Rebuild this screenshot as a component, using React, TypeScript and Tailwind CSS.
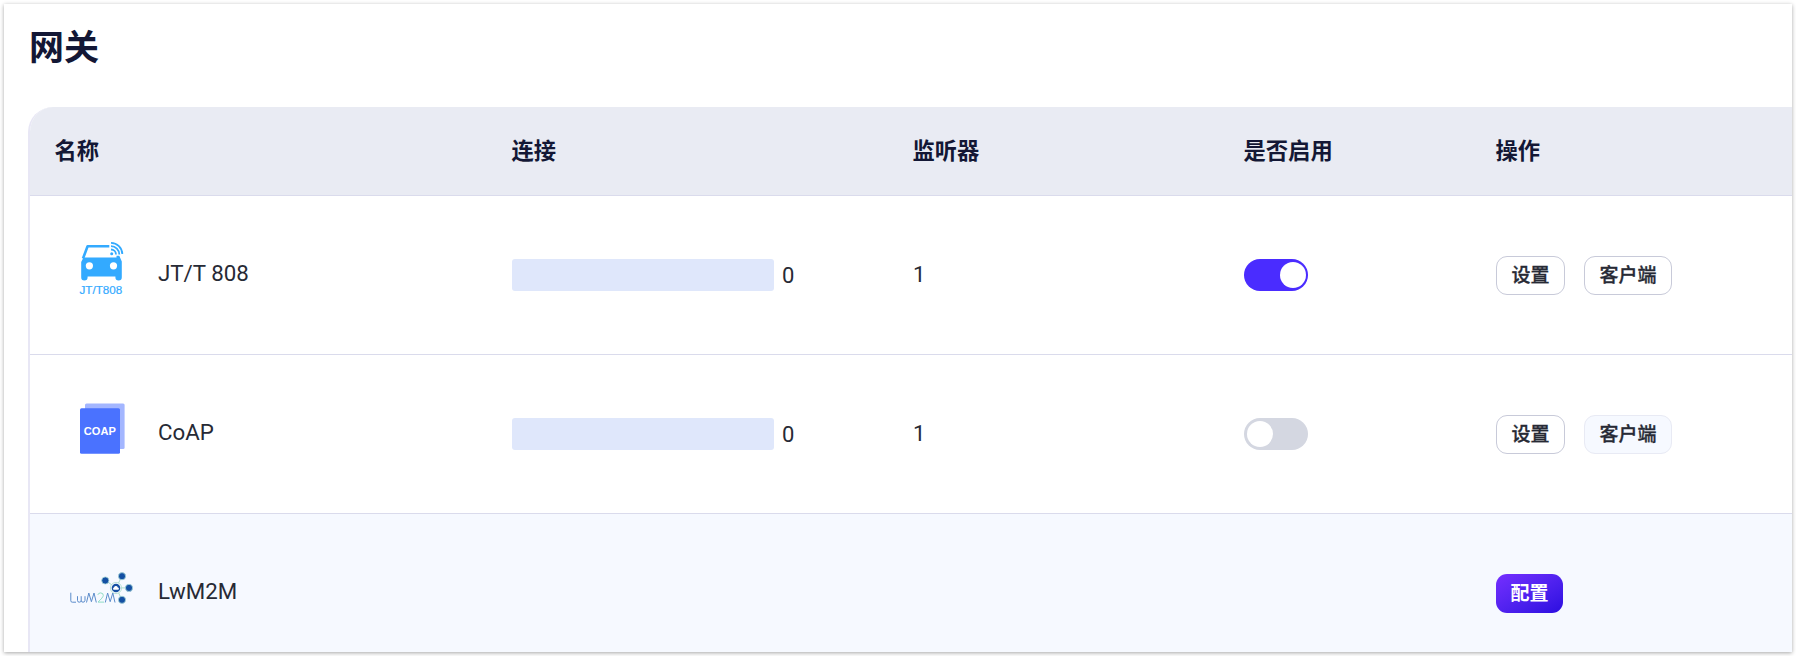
import type { ReactNode } from "react";

const columns = ["名称", "连接", "监听器", "是否启用", "操作"];
const grid = "grid grid-cols-[457px_401px_331px_252px_1fr] pl-[25px]";

function CarLogo() {
  return (
    <svg width="64" height="64" viewBox="0 0 64 64">
      <path d="M38.300 12.200H16.600L12 24.500" fill="none" stroke="#33aaff" strokeWidth="2.600" strokeLinejoin="round" />
      <path
        d="M12.500 23.600H45.500V21.800H48.300L50.800 27.500V43.300A3.200 3.200 0 0 1 44.400 43.300V42.600H16.600V43.300A3.200 3.200 0 0 1 10.200 43.300V28Z"
        fill="#33aaff"
      />
      <circle cx="18.400" cy="31.800" r="3.600" fill="#fff" />
      <circle cx="42.500" cy="31.800" r="3.600" fill="#fff" />
      <circle cx="40.700" cy="19.700" r="1.500" fill="#33aaff" />
      <g fill="none" stroke="#33aaff" strokeWidth="1.800">
        <path d="M40 15.500A5 5 0 0 1 45 20.500" />
        <path d="M40 12.200A8.300 8.300 0 0 1 48.300 20.500" />
        <path d="M40 8.900A11.400 11.400 0 0 1 51.300 20" />
      </g>
      <text x="8.500" y="60" textLength="42.700" lengthAdjust="spacingAndGlyphs" fontSize="11.200" fill="#33aaff" stroke="#33aaff" strokeWidth="0.200" fontFamily="Liberation Sans, sans-serif">
        JT/T808
      </text>
    </svg>
  );
}

function CoapLogo() {
  return (
    <svg width="64" height="64" viewBox="0 0 64 64">
      <rect x="14" y="10.500" width="39.600" height="45.500" rx="1.500" fill="#a3b6ff" />
      <rect x="9" y="15.200" width="40" height="45.500" rx="1.500" fill="#4a72ff" />
      <text x="12.800" y="41.900" textLength="32" lengthAdjust="spacingAndGlyphs" fontSize="11.500" fontWeight="700" fill="#fff" fontFamily="Liberation Sans, sans-serif">
        COAP
      </text>
    </svg>
  );
}

function Lwm2mLogo() {
  return (
    <svg width="66" height="64" viewBox="0 -3.200 66 64">
      <g stroke="#a9dccb" strokeWidth="1">
        <path d="M46 32.700L35.300 25M46 32.700L52 21M46 32.700H59M46 32.700L52 44.500" />
      </g>
      <g fill="#1450a3" stroke="#a9d8d8" strokeWidth="0.800">
        <circle cx="35.300" cy="25.300" r="3.600" />
        <circle cx="52" cy="21" r="3.600" />
        <circle cx="59" cy="32.700" r="3.600" />
        <circle cx="52" cy="44.600" r="3.600" />
      </g>
      <circle cx="46" cy="32.800" r="5.600" fill="#f6f9ff" stroke="#a9dccb" strokeWidth="0.800" />
      <circle cx="46" cy="32.800" r="4.300" fill="#1450a3" />
      <path d="M43.600 34.500a1.300 1.300 0 0 1 0.400-2.300a2 2 0 0 1 3.800 0a1.300 1.300 0 0 1 0.600 2.300z" fill="#fff" />
      <g fill="none" stroke="#5b8ccb" strokeWidth="1">
        <path d="M0.800 37.500V45.500Q0.800 47 2.300 47H6" />
        <path d="M7.500 41V45.200Q7.500 47 9.300 47T11.200 45.200V41M11.200 45.200Q11.200 47 13 47T15 45.200V41" />
        <path d="M16.500 47.300L18.800 37.800L21.400 46.500L24 37.800L26.300 47.300" />
        <path d="M35.300 47.300L37.600 37.800L40.200 46.500L42.800 37.800L45 47.300" />
      </g>
      <path d="M27.800 39.700Q28.300 37.700 30.700 37.700Q33.500 38 33.300 40.300Q33 42.300 28 46.900H34" fill="none" stroke="#8fdcc4" strokeWidth="1" />
    </svg>
  );
}

function Toggle({ on }: { on: boolean }) {
  return (
    <div
      role="switch"
      aria-checked={on}
      className={`flex h-8 w-16 items-center rounded-full ${on ? "justify-end bg-[#4a2cff] pr-[2px]" : "bg-[#d4d7e1] pl-[3px]"}`}
    >
      <div className="size-[26px] rounded-full bg-white" />
    </div>
  );
}

function Button({ children, disabled }: { children: ReactNode; disabled?: boolean }) {
  return (
    <button
      className={`h-[39px] rounded-[11px] border px-[14.500px] pt-px text-[19px] leading-[36px] font-medium text-[#272a35] [-webkit-text-stroke:0.300px_#272a35] ${
        disabled ? "border-[#e8eaf4] bg-[#f6f9ff]" : "border-[#c8cad9] bg-white"
      }`}
    >
      {children}
    </button>
  );
}

function NameCell({ logo, name, className }: { logo: ReactNode; name: string; className: string }) {
  return (
    <div className="flex items-start pt-[38px]">
      <div className={className}>{logo}</div>
      <div className="mt-[25px] text-[22.300px] leading-7">{name}</div>
    </div>
  );
}

function GatewayRow({ logo, name, on }: { logo: ReactNode; name: string; on: boolean }) {
  return (
    <div className={`${grid} h-[159px] border-b border-[#dadbec]`}>
      <NameCell logo={logo} name={name} className="mr-[23px] ml-[16px] w-16" />
      <div className="mt-[63px] flex h-8 items-center gap-2">
        <div className="h-8 w-[262px] rounded-[3px] bg-[#dfe7fb]" />
        <span className="text-[22px]">0</span>
      </div>
      <div className="mt-[63px] h-8 text-[22px] leading-8">1</div>
      <div className="mt-[63px]">
        <Toggle on={on} />
      </div>
      <div className="mt-[60px] flex items-start gap-[19px]">
        <Button>设置</Button>
        <Button disabled={!on}>客户端</Button>
      </div>
    </div>
  );
}

export default function App() {
  return (
    <div className="h-[656px] w-[1796px] overflow-hidden bg-white p-1 font-[Roboto,'Noto_Sans_CJK_SC',sans-serif] text-[#272a35]">
      <main className="flex h-[648px] flex-col overflow-hidden bg-white pl-6 shadow-[0_1px_4px_rgba(0,0,0,0.35)]">
        <h1 className="h-[103px] pt-[23px] pl-px text-[35px] leading-[44px] font-bold text-[#131735]">网关</h1>
        <section className="min-h-0 flex-1 overflow-hidden rounded-tl-[25px] border-l-2 border-[#e8e7f5]">
          <div className={`${grid} h-[89px] border-b border-[#dadbec] bg-[#e9ebf3] text-[22.300px] leading-[89px] font-bold text-[#131735]`}>
            {columns.map((c) => (
              <div key={c} className="-ml-px pl-[0.500px]">
                {c}
              </div>
            ))}
          </div>
          <GatewayRow logo={<CarLogo />} name="JT/T 808" on />
          <GatewayRow logo={<CoapLogo />} name="CoAP" on={false} />
          <div className={`${grid} h-[159px] bg-[#f6f9ff]`}>
            <NameCell logo={<Lwm2mLogo />} name="LwM2M" className="mr-[22px] ml-[15px] w-[66px]" />
            <div />
            <div />
            <div />
            <div className="mt-[60px]">
              <button className="h-[39px] rounded-[11px] bg-linear-to-br from-[#752eff] to-[#2b0be0] px-[14.500px] pt-px text-[19px] leading-[38px] font-bold text-white">
                配置
              </button>
            </div>
          </div>
        </section>
      </main>
    </div>
  );
}
